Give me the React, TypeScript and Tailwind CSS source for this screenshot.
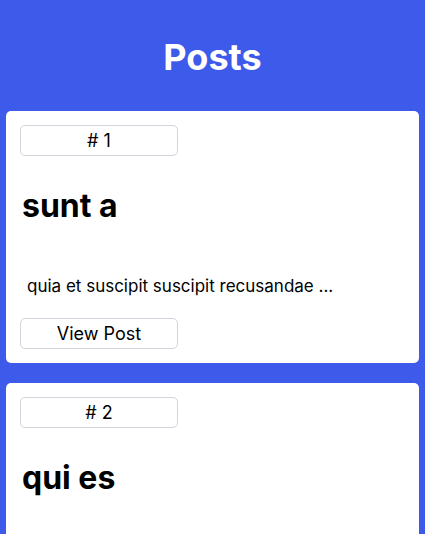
const posts = [
  { id: 1, title: 'sunt a', body: 'quia et suscipit suscipit recusandae ...' },
  { id: 2, title: 'qui es', body: 'est rerum tempore vitae sequi sint ...' },
  { id: 3, title: 'ea mol', body: 'et iusto sed quo iure voluptatem ...' },
];

function PostCard({ post }: { post: (typeof posts)[number] }) {
  return (
    <div className="mx-[6px] rounded-[5px] bg-white p-[14px]">
      <div className="h-[31px] w-[158px] rounded-[5px] border border-gray-300 text-center text-lg leading-[29px]">
        # {post.id}
      </div>
      <h2 className="mt-[32px] pl-[2px] text-[32px] font-bold leading-[36px]">{post.title}</h2>
      <p className="mt-[50px] pl-[7px] text-[17px] leading-6">{post.body}</p>
      <button className="mt-[20px] block h-[31px] w-[158px] rounded-[5px] border border-gray-300 text-center text-lg leading-[29px]">
        View Post
      </button>
    </div>
  );
}

export default function App() {
  return (
    <div className="min-h-screen bg-[#3d5aeb] pb-5 text-black" style={{ fontFamily: 'Inter, "Noto Sans", sans-serif' }}>
      <header className="pt-[37px] pb-[34px]">
        <h1 className="text-center text-4xl font-bold leading-10 text-white">Posts</h1>
      </header>
      <div className="flex flex-col gap-5">
        {posts.map((p) => (
          <PostCard key={p.id} post={p} />
        ))}
      </div>
    </div>
  );
}
